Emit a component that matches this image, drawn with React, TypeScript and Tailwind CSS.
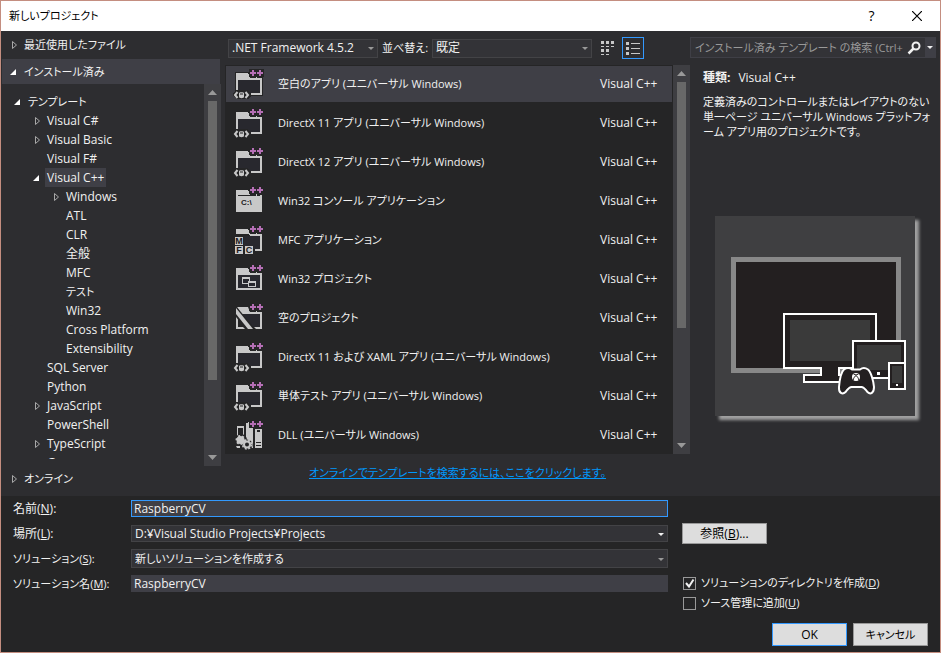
import type { ReactNode } from "react";

const ink = "#c8c8c8";
const plum = "#b56fb5";

type Kind = "store" | "console" | "mfc" | "win32" | "empty" | "dll";

const templates: { name: string; kind: Kind }[] = [
  { name: "空白のアプリ (ユニバーサル Windows)", kind: "store" },
  { name: "DirectX 11 アプリ (ユニバーサル Windows)", kind: "store" },
  { name: "DirectX 12 アプリ (ユニバーサル Windows)", kind: "store" },
  { name: "Win32 コンソール アプリケーション", kind: "console" },
  { name: "MFC アプリケーション", kind: "mfc" },
  { name: "Win32 プロジェクト", kind: "win32" },
  { name: "空のプロジェクト", kind: "empty" },
  { name: "DirectX 11 および XAML アプリ (ユニバーサル Windows)", kind: "store" },
  { name: "単体テスト アプリ (ユニバーサル Windows)", kind: "store" },
  { name: "DLL (ユニバーサル Windows)", kind: "dll" },
];

type Node = { label: string; level: 0 | 1 | 2; state?: "open" | "closed"; selected?: boolean; small?: boolean };

const tree: Node[] = [
  { label: "テンプレート", level: 0, state: "open", small: true },
  { label: "Visual C#", level: 1, state: "closed" },
  { label: "Visual Basic", level: 1, state: "closed" },
  { label: "Visual F#", level: 1 },
  { label: "Visual C++", level: 1, state: "open", selected: true },
  { label: "Windows", level: 2, state: "closed" },
  { label: "ATL", level: 2 },
  { label: "CLR", level: 2 },
  { label: "全般", level: 2 },
  { label: "MFC", level: 2 },
  { label: "テスト", level: 2, small: true },
  { label: "Win32", level: 2 },
  { label: "Cross Platform", level: 2 },
  { label: "Extensibility", level: 2 },
  { label: "SQL Server", level: 1 },
  { label: "Python", level: 1 },
  { label: "JavaScript", level: 1, state: "closed" },
  { label: "PowerShell", level: 1 },
  { label: "TypeScript", level: 1, state: "closed" },
  { label: "Game", level: 1 },
];

const indent = ["pl-[11px]", "pl-[30px]", "pl-[49px]"];

function Twisty({ state }: { state?: "open" | "closed" }) {
  return (
    <svg className="w-3 h-3 shrink-0" viewBox="0 0 12 12" aria-hidden="true">
      {state === "open" && <path d="M8 3V9H2Z" fill="#fff" />}
      {state === "closed" && <path d="M4.5 2.5V9.5L8.5 6Z" fill="none" stroke="#a8a8a8" />}
    </svg>
  );
}

function ScrollBar({ thumb }: { thumb: string }) {
  return (
    <div className="w-[17px] shrink-0 flex flex-col items-center bg-[#3e3e42]">
      <svg className="w-[17px] h-[17px] shrink-0" viewBox="0 0 17 17" aria-hidden="true">
        <path d="M4 11L8.5 6L13 11Z" fill="#999" />
      </svg>
      <div className={`w-[9px] bg-[#686868] ${thumb}`} />
      <svg className="w-[17px] h-[17px] shrink-0 mt-auto" viewBox="0 0 17 17" aria-hidden="true">
        <path d="M4 6L8.5 11L13 6Z" fill="#999" />
      </svg>
    </div>
  );
}

function TemplateIcon({ kind }: { kind: Kind }) {
  return (
    <svg className="w-8 h-8 shrink-0" viewBox="0 0 32 32" shapeRendering="crispEdges" aria-hidden="true">
      {kind !== "dll" && <path d="M3 4H17V9H31V28H3Z" fill="#252526" />}
      {(kind === "store" || kind === "win32") && (
        <>
          <rect x="6" y="12" width="22" height="13" fill="#28282e" />
          <path d="M4 5H16L18 10H30V27H4ZM6 12V25H28V12Z" fill={ink} fillRule="evenodd" />
        </>
      )}
      {kind === "store" && (
        <>
          <path d="M1 26L4 22H16L19 26V28L16 31H4L1 28Z" fill="#252526" />
          <g shapeRendering="auto" fill="none" stroke={ink} strokeWidth="2">
            <path d="M5.5 24L3 27L5.5 30M13.5 24L16 27L13.5 30" />
            <path d="M7 25C7 24 12 24 12 25V29C12 30.500 7 30.500 7 29Z" fill={ink} stroke="none" />
            <path d="M8 26H11" stroke="#252526" strokeWidth="1" />
          </g>
        </>
      )}
      {kind === "console" && (
        <>
          <path d="M4 5H16L18 10H30V27H4Z" fill={ink} />
          <path d="M6 10.5H28" stroke="#252526" />
          <text x="9" y="20" fontSize="8" fontWeight="600" fill="#1b1b1c" className="font-['Liberation_Sans']">
            C:\
          </text>
        </>
      )}
      {kind === "mfc" && (
        <>
          <rect x="12" y="12" width="16" height="13" fill="#28282e" />
          <path d="M4 5H16L18 10H30V27H23V25H28V12H18L16 10H4Z" fill={ink} />
          <path d="M3 13H11V21H3ZM3 22H11V30H3ZM13 22H21V30H13Z" fill={ink} />
          <g fontSize="9" fontWeight="700" fill="#1b1b1c" textAnchor="middle" className="font-['Liberation_Sans']">
            <text x="7" y="20">M</text>
            <text x="7" y="29">F</text>
            <text x="17" y="29">C</text>
          </g>
        </>
      )}
      {kind === "win32" && (
        <g fill="none" stroke={ink}>
          <path d="M17.5 18V14.5H10.5V20.5H16" />
          <path d="M10 15H18" strokeWidth="2" />
          <rect x="16.5" y="18.5" width="7" height="5" />
          <path d="M16 19H24" strokeWidth="2" />
        </g>
      )}
      {kind === "empty" && (
        <g shapeRendering="auto">
          <path d="M8 12H28V25H21Z" fill="#28282e" />
          <path d="M5 5H16L18 10H30V27H24L22 25H28V12H9Z" fill={ink} />
          <path d="M4 4L23 27H15L4 12Z" fill="#252526" />
          <path d="M4 6L21 27H16L4 12Z" fill={ink} />
          <path d="M4 15L6 17.5V25H11L13 27H4Z" fill={ink} />
        </g>
      )}
      {kind === "dll" && (
        <g>
          <path d="M5 7H12V17H5ZM6 9V16H11V9Z" fill={ink} fillRule="evenodd" />
          <path d="M14 4H16V3H17V8H21V29H14Z" fill={ink} />
          <path d="M23 10H30V29H23Z" fill={ink} />
          <path d="M25 11H28V13H25ZM24 23H29V24H24ZM24 26H29V27H24Z" fill="#252526" />
          <g shapeRendering="auto">
            <circle cx="9" cy="21" r="6" fill="#252526" />
            <circle cx="15" cy="26" r="5.5" fill="#252526" />
            <circle cx="8.5" cy="21" r="4" fill={ink} strokeDasharray="2 2" stroke={ink} strokeWidth="2" />
            <circle cx="15" cy="25.5" r="3" fill="#252526" stroke={ink} strokeWidth="2" />
            <circle cx="15" cy="25.5" r="4.5" fill="none" stroke={ink} strokeWidth="1.5" strokeDasharray="2 1.6" />
            <path d="M4 27H8V29H5Z" fill={ink} />
          </g>
        </g>
      )}
      <path d="M17 1H32V9H17Z" fill="#252526" />
      <path d="M20 2H22V4H24V6H22V8H20V6H18V4H20ZM27 2H29V4H31V6H29V8H27V6H25V4H27Z" fill={plum} />
      {kind !== "dll" && <path d="M24.5 9V11" stroke={ink} />}
    </svg>
  );
}

function DeviceFamily() {
  return (
    <svg
      className="w-[200px] h-[200px] bg-[#3f3f41] shadow-[4px_4px_3px_0px_#a0a0a0]"
      viewBox="0 0 200 200"
      role="img"
      aria-label="Windows"
    >
      <rect x="18.5" y="43.5" width="165" height="111" fill="#231f20" stroke="#888" strokeWidth="5" />
      <path d="M69 98H161V152H124V159H138V166H89V159H106V152H69Z" fill="#231f20" stroke="#fff" strokeWidth="2" />
      <rect x="124" y="152" width="14" height="7" fill="#888" stroke="#fff" strokeWidth="2" />
      <rect x="75" y="104" width="80" height="41" fill="#3a3a3a" />
      <rect x="138" y="125" width="52" height="37" fill="#231f20" stroke="#fff" strokeWidth="2" />
      <rect x="142" y="129" width="44" height="25" fill="#3a3a3a" />
      <rect x="162" y="156" width="3" height="3" fill="#fff" />
      <rect x="174" y="147" width="16" height="26" fill="#231f20" stroke="#fff" strokeWidth="2" />
      <rect x="177" y="150" width="10" height="17" fill="#3a3a3a" />
      <rect x="181" y="168" width="2" height="2" fill="#fff" />
      <path
        d="M129 153.5C132 151.5 135 152 137 153.5H145C147 152 150 151.5 153 153.5C156 156 158.5 165 159 171C159 177 155.5 179 152.5 176C150 173 149 171 146.5 171H136.5C134 171 133 173 130.5 176C127.500 179 123.500 177 124 171C124.500 165 126 156 129 153.500Z"
        fill="#231f20"
        stroke="#fff"
        strokeWidth="2"
      />
      <circle cx="141" cy="161" r="4" fill="#fff" />
      <path d="M138 164.5C138.5 162 140 160 141 159.5C142 160 143.5 162 144 164.5M138.5 158L141 159L143.5 158" fill="none" stroke="#231f20" />
    </svg>
  );
}

function Dropdown({
  id,
  label,
  value,
  className,
  bright,
}: {
  id: string;
  label?: string;
  value: string;
  className: string;
  bright?: boolean;
}) {
  return (
    <div className={`relative ${className}`}>
      <select
        id={id}
        aria-label={label}
        className="block w-full h-full appearance-none border border-[#434346] bg-[#333337] pl-[3px] pr-5 leading-4 outline-none"
      >
        <option>{value}</option>
      </select>
      <svg className="absolute right-1 top-1/2 w-[6px] h-[3px] -mt-px pointer-events-none" viewBox="0 0 6 3" aria-hidden="true">
        <path d="M0 0H6L3 3Z" fill={bright ? "#f1f1f1" : "#999"} />
      </svg>
    </div>
  );
}

function Field({
  id,
  text,
  hotkey,
  size = "",
  children,
}: {
  id: string;
  text: string;
  hotkey: string;
  size?: string;
  children: ReactNode;
}) {
  return (
    <div className="flex items-center h-[25px]">
      <label htmlFor={id} className={`w-[118px] shrink-0 ${size}`}>
        {text}(<u>{hotkey}</u>):
      </label>
      {children}
    </div>
  );
}

function Check({ id, text, hotkey, checked }: { id: string; text: string; hotkey: string; checked?: boolean }) {
  return (
    <div className="flex items-center gap-[5px] h-5">
      <div className="relative w-[13px] h-[13px]">
        <input
          id={id}
          type="checkbox"
          defaultChecked={checked}
          className="peer block w-[13px] h-[13px] appearance-none border border-[#999] bg-[#252526]"
        />
        <svg className="absolute inset-0 hidden peer-checked:block pointer-events-none" viewBox="0 0 13 13" aria-hidden="true">
          <path d="M3 6L6 9.5L10.5 2.5" fill="none" stroke="#f1f1f1" strokeWidth="2" />
        </svg>
      </div>
      <label htmlFor={id} className="text-[11px]">
        {text}(<u>{hotkey}</u>)
      </label>
    </div>
  );
}

export default function App() {
  return (
    <div className="min-h-screen flex flex-col border border-[#c48e80] bg-[#252526] text-[#f1f1f1] text-[12px] leading-4 whitespace-nowrap font-['Open_Sans','Noto_Sans_CJK_JP',sans-serif] [font-feature-settings:'palt','kern']">
      {/* Title bar */}
      <header className="flex items-center h-[30px] pl-2 bg-white text-black">
        <h1 className="text-[11px]">新しいプロジェクト</h1>
        <button aria-label="ヘルプ" className="ml-auto w-[45px] text-[14px]">?</button>
        <button aria-label="閉じる" className="w-[46px] flex justify-center">
          <svg className="w-[10px] h-[10px]" viewBox="0 0 10 10">
            <path d="M0 0L10 10M10 0L0 10" stroke="#000" strokeWidth="1.2" />
          </svg>
        </button>
      </header>

      <main className="flex h-[465px] bg-[#2d2d30]">
        {/* Categories */}
        <nav className="w-[224px] shrink-0 flex flex-col">
          <button className="flex items-center gap-1 h-7 pl-[7px] text-[11px]">
            <Twisty state="closed" />
            最近使用したファイル
          </button>
          <button className="flex items-center gap-1 h-[25px] ml-px mr-[5px] pl-[6px] bg-[#3f3f46] text-[11px]">
            <Twisty state="open" />
            インストール済み
          </button>
          <div className="flex h-[382px] mr-1">
            <ul className="flex-1 h-[375px] pt-2 overflow-hidden">
              {tree.map((node) => (
                <li key={node.label} className={`flex items-center h-[19px] ${indent[node.level]}`}>
                  <Twisty state={node.state} />
                  <span
                    className={`ml-[2px] px-[2px] leading-[19px] ${node.selected ? "bg-[#3f3f46]" : ""} ${node.small ? "text-[11px]" : ""}`}
                  >
                    {node.label}
                  </span>
                </li>
              ))}
            </ul>
            <ScrollBar thumb="h-[279px]" />
          </div>
          <button className="flex items-center gap-1 h-[25px] pl-[7px] text-[11px]">
            <Twisty state="closed" />
            オンライン
          </button>
        </nav>

        {/* Template list */}
        <section className="flex-1 min-w-0 flex flex-col">
          <div className="flex items-center h-[34px] pl-[3px]">
            <Dropdown id="framework" label="フレームワーク" value=".NET Framework 4.5.2" className="w-[150px] h-[19px]" />
            <label htmlFor="sort" className="w-[50px] ml-1 text-[11px]">並べ替え:</label>
            <Dropdown id="sort" value="既定" className="w-[160px] h-[19px]" />
            <button aria-label="アイコン" className="w-[22px] h-[22px] ml-[5px] flex items-center justify-center">
              <svg className="w-[14px] h-[14px]" viewBox="0 0 14 14" shapeRendering="crispEdges">
                <path
                  d="M0 0H3V3H0ZM5 0H8V3H5ZM10 0H13V3H10ZM0 8H3V11H0ZM5 8H8V11H5ZM0 5H3V6H0ZM5 5H8V6H5ZM10 5H13V6H10ZM0 13H3V14H0ZM5 13H8V14H5Z"
                  fill={ink}
                />
              </svg>
            </button>
            <button aria-label="一覧" className="w-[22px] h-[22px] ml-[3px] flex items-center justify-center border border-[#3399ff]">
              <svg className="w-[14px] h-[14px]" viewBox="0 0 14 14" shapeRendering="crispEdges">
                <path d="M0 1H3V4H0ZM0 6H3V9H0ZM0 11H3V14H0ZM5 2H14V3H5ZM5 7H14V8H5ZM5 12H14V13H5Z" fill={ink} />
              </svg>
            </button>
          </div>
          <div className="flex h-[389px] bg-[#252526]">
            <ul className="flex-1 min-w-0 flex flex-col gap-[3px] p-px">
              {templates.map((t, i) => (
                <li key={t.name} className={`flex items-center h-9 pl-[6px] ${i === 0 ? "bg-[#3f3f46]" : ""}`}>
                  <TemplateIcon kind={t.kind} />
                  <span className="flex-1 ml-[14px] text-[11px]">{t.name}</span>
                  <span className="w-[72px]">Visual C++</span>
                </li>
              ))}
            </ul>
            <ScrollBar thumb="h-[246px]" />
          </div>
          <div className="flex-1 flex items-center justify-center pb-1">
            <a href="#online" className="text-[#0097fb] text-[11px] underline">
              オンラインでテンプレートを検索するには、ここをクリックします。
            </a>
          </div>
        </section>

        {/* Details */}
        <aside className="w-[250px] shrink-0 flex flex-col pt-[6px] pr-1">
          <div className="flex items-center h-[21px] border border-[#3f3f46] bg-[#333337]">
            <input
              aria-label="検索"
              placeholder="インストール済み テンプレート の検索 (Ctrl+E)"
              className="w-[212px] pl-1 bg-transparent text-[11px] outline-none placeholder:text-[#999]"
            />
            <button aria-label="検索を実行" className="w-[22px] flex justify-center">
              <svg className="w-[14px] h-[14px]" viewBox="0 0 14 14">
                <circle cx="9" cy="5" r="3.5" fill="none" stroke="#f1f1f1" strokeWidth="2" />
                <path d="M6.5 7.5L1.5 12.5" stroke="#f1f1f1" strokeWidth="2.5" />
              </svg>
            </button>
            <button aria-label="検索オプション" className="flex-1 h-full flex items-center justify-center bg-[#3f3f46]">
              <svg className="w-[6px] h-[3px]" viewBox="0 0 6 3">
                <path d="M0 0H6L3 3Z" fill="#f1f1f1" />
              </svg>
            </button>
          </div>
          <div className="pl-[13px] pt-3">
            <p>
              <b>種類:</b>
              <span className="ml-2">Visual C++</span>
            </p>
            <p className="mt-2 text-[11px] leading-[15px] whitespace-normal [word-break:break-all]">
              定義済みのコントロールまたはレイアウトのない単一ページ ユニバーサル Windows プラットフォーム アプリ用のプロジェクトです。
            </p>
          </div>
          <div className="mt-auto pl-[25px] pb-20">
            <DeviceFamily />
          </div>
        </aside>
      </main>

      {/* Project settings */}
      <form className="flex-1 flex flex-col pl-3 pr-3 pb-[6px]">
        <div className="flex">
          <div className="flex-1 min-w-0">
            <Field id="name" text="名前" hotkey="N">
              <input
                id="name"
                defaultValue="RaspberryCV"
                className="flex-1 h-[17px] px-[2px] border border-[#3399ff] bg-[#3f3f46] outline-none"
              />
            </Field>
            <Field id="location" text="場所" hotkey="L">
              <Dropdown id="location" value="D:¥Visual Studio Projects¥Projects" className="flex-1 h-[17px]" bright />
            </Field>
            <Field id="solution" text="ソリューション" hotkey="S" size="text-[11px]">
              <Dropdown id="solution" value="新しいソリューションを作成する" className="flex-1 h-[19px] text-[11px]" />
            </Field>
            <Field id="solution-name" text="ソリューション名" hotkey="M" size="text-[11px]">
              <input
                id="solution-name"
                defaultValue="RaspberryCV"
                className="flex-1 h-[17px] px-[2px] border border-[#3f3f46] bg-[#3f3f46] outline-none"
              />
            </Field>
          </div>
          <div className="w-[260px] shrink-0 pl-[14px] pt-[27px]">
            <button type="button" className="block w-[85px] h-[21px] mb-[29px] border border-[#999] bg-[#ddd] text-black">
              参照(<u>B</u>)...
            </button>
            <div className="pl-px">
              <Check id="create-dir" text="ソリューションのディレクトリを作成" hotkey="D" checked />
              <Check id="source-control" text="ソース管理に追加" hotkey="U" />
            </div>
          </div>
        </div>
        <div className="mt-auto flex justify-end gap-[6px]">
          <button type="button" className="w-[75px] h-[23px] border border-[#3399ff] bg-[#ddd] text-black">OK</button>
          <button type="button" className="w-[75px] h-[23px] border border-[#999] bg-[#ddd] text-[11px] text-black">キャンセル</button>
        </div>
      </form>
    </div>
  );
}
